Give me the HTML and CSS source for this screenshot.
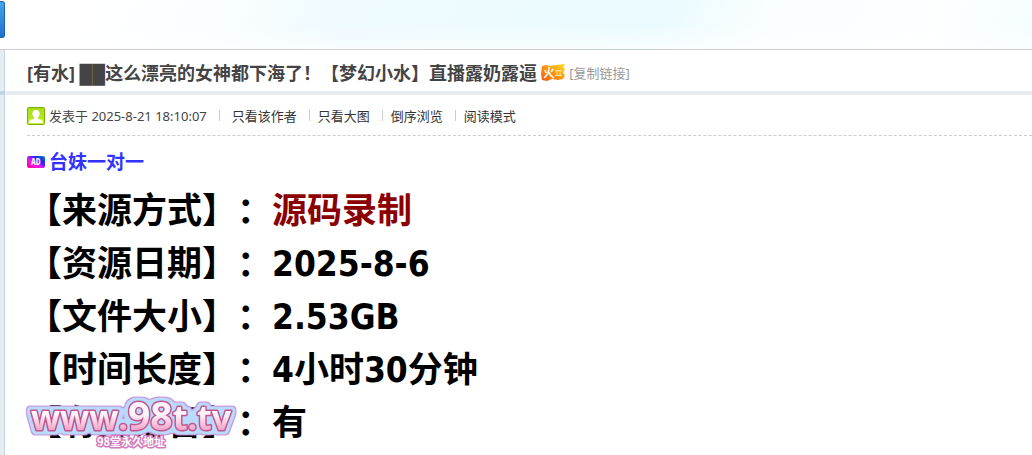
FILE: index.html
```html
<!DOCTYPE html>
<html lang="zh-CN">
  <head>
    <meta charset="UTF-8" />
    <meta name="viewport" content="width=device-width, initial-scale=1.0" />
    <title>台妹一对一</title>
    <link rel="stylesheet" href="styles.css">
  </head>
  <body>
    <div class="header">
      <button class="nav-btn" type="button" aria-label="返回"></button>
    </div>
    <div class="thread">
      <div class="side">
        <div class="side-head"></div>
        <div class="side-body"></div>
      </div>
      <div class="main">
        <div class="title">
          <h1><a href="#">[有水]</a> <span class="block">██</span>这么漂亮的女神都下海了！【梦幻小水】直播露奶露逼</h1>
          <svg class="hot" width="24" height="18" viewBox="0 0 24 18">
            <defs>
              <linearGradient id="fire" x1="0" y1="1" x2="1" y2="0">
                <stop offset="0" stop-color="#ef5a10" />
                <stop offset="0.5" stop-color="#ff9410" />
                <stop offset="1" stop-color="#ffe026" />
              </linearGradient>
            </defs>
            <path d="M1 2L5 1L9 2L15 1L24 0L22 4L24 5L22 9L24 11L22 15L17 16L11 15L6 17L1 16L0 10Z" fill="url(#fire)" />
            <path d="M8 3Q8 10 3 14M8 8Q9 12 13 14M4 6L5 9M12 5L10 8" fill="none" stroke="#fff" stroke-width="1.6" />
            <path d="M14 6.500H21M14 11.500H21M16 6V12M19 6V12" stroke="#ffe9a0" />
          </svg>
          <a class="copy" href="#">[复制链接]</a>
        </div>
        <div class="post">
          <div class="info">
            <svg width="18" height="18" viewBox="0 0 18 18">
              <defs>
                <linearGradient id="green" x1="0" y1="0" x2="0" y2="1">
                  <stop offset="0" stop-color="#a5dc18" />
                  <stop offset="1" stop-color="#c6ee35" />
                </linearGradient>
              </defs>
              <rect x="0.5" y="0.5" width="17" height="17" rx="1" fill="url(#green)" stroke="#79b000" />
              <path d="M9 3C4 3 5 9 7 10V12L3 13L2 16H16L15 13L11 12V10C13 9 14 3 9 3Z" fill="#fff" />
            </svg>
            <span class="time">发表于 2025-8-21 18:10:07</span>
            <i></i><a class="author" href="#">只看该作者</a>
            <i></i><a href="#">只看大图</a>
            <i></i><a href="#">倒序浏览</a>
            <i></i><a href="#">阅读模式</a>
          </div>
          <div class="ad">
            <svg width="18" height="12" viewBox="0 0 18 12">
              <defs>
                <linearGradient id="adbg" x1="0" y1="1" x2="1" y2="0">
                  <stop offset="0" stop-color="#ff0090" />
                  <stop offset="0.4" stop-color="#ed18ee" />
                  <stop offset="0.7" stop-color="#2023ec" />
                  <stop offset="1" stop-color="#008fb5" />
                </linearGradient>
              </defs>
              <rect width="18" height="12" rx="2" fill="url(#adbg)" />
              <text x="4" y="9" class="ad-text">AD</text>
            </svg>
            <a href="#">台妹一对一</a>
          </div>
          <div class="content">
            <p>【来源方式】：<span class="red">源码录制</span></p>
            <p>【资源日期】：2025-8-6</p>
            <p>【文件大小】：2.53GB</p>
            <p>【时间长度】：4小时30分钟</p>
            <p>【有无语音】：有</p>
            <svg class="mark" width="224" height="64" viewBox="0 0 224 64">
              <defs>
                <linearGradient id="pink" x1="0" y1="0" x2="0" y2="1">
                  <stop offset="0.5" stop-color="#fff4fa" />
                  <stop offset="0.8" stop-color="#f3a2c8" />
                </linearGradient>
                <!-- blue halo with a thin purple rim -->
                <filter id="halo" filterUnits="userSpaceOnUse" x="0" y="0" width="224" height="64" color-interpolation-filters="sRGB">
                  <feMorphology in="SourceAlpha" operator="dilate" radius="3" />
                  <feGaussianBlur stdDeviation="1.5" />
                  <feComponentTransfer result="outer">
                    <feFuncA type="linear" slope="4" intercept="-0.6" />
                  </feComponentTransfer>
                  <feFlood flood-color="#ca91dc" />
                  <feComposite in2="outer" operator="in" result="rim" />
                  <feMorphology in="outer" operator="erode" radius="1" result="inner" />
                  <feFlood flood-color="#b9dafa" />
                  <feComposite in2="inner" operator="in" result="blue" />
                  <feMerge>
                    <feMergeNode in="rim" />
                    <feMergeNode in="blue" />
                    <feMergeNode in="SourceGraphic" />
                  </feMerge>
                </filter>
              </defs>
              <text class="mark-url" x="9" y="39">www.<tspan class="num">98</tspan>t.tv</text>
              <text class="mark-sub" x="75" y="55">98堂永久地址</text>
            </svg>
          </div>
        </div>
      </div>
    </div>
  </body>
</html>
```
FILE: styles.css
```css
* {
  margin: 0;
  padding: 0;
  box-sizing: border-box;
}
html {
  height: 100%;
}
body {
  height: 100%;
  display: flex;
  flex-direction: column;
  overflow: hidden;
  background-color: #fff;
  color: #444;
  font: 13px/18px "Noto Sans", "Noto Sans CJK SC", sans-serif;
  text-spacing-trim: space-all;
}
a {
  color: #333;
  text-decoration: none;
}
svg {
  flex: none;
}
.header {
  flex: none;
  height: 50px;
  border-bottom: 1px solid #cdcdcd;
  background: linear-gradient(to bottom, transparent 50%, rgba(255, 255, 255, 0.6)),
    linear-gradient(110deg, #fff 8%, #fafeff 22%, #effbff 32%, #ebfbff 64%, #fafeff 74%, #fdffff 90%, #f4fdff 100%);
}
.nav-btn {
  display: block;
  width: 5px;
  height: 37px;
  margin-top: 1px;
  border: 1px solid #1c63ad;
  border-left: 0;
  border-radius: 0 3px 3px 0;
  background: linear-gradient(#48a5ea, #1e70ce);
}
.thread {
  flex: 1;
  display: flex;
}
.side {
  width: 5px;
  background-color: #e5edf2;
  border-right: 1px solid #c2d5e3;
}
.side-head {
  height: 45px;
  border-bottom: 4px solid #c2d5e3;
}
.main {
  flex: 1;
}
.title {
  display: flex;
  align-items: center;
  height: 45px;
  padding: 5px 22px 0;
  border-bottom: 4px solid #e5edf2;
}
.title h1 {
  font-size: 18px;
  line-height: 24px;
  white-space: nowrap;
}
.title h1 a {
  color: #444;
}
.block {
  font-family: "Liberation Sans", sans-serif;
}
.hot {
  margin: 0 4px;
}
.title .copy {
  color: #999;
}
.post {
  padding-left: 22px;
}
.info {
  display: flex;
  align-items: center;
  height: 41px;
  padding-top: 1px;
  border-bottom: 1px dashed #cdcdcd;
}
.time {
  margin-left: 4px;
}
.info i {
  width: 1px;
  height: 11px;
  margin: 0 8px 0 12px;
  background-color: #ccc;
}
.info .author {
  margin-left: 4px;
}
.ad {
  display: flex;
  align-items: center;
  gap: 4px;
  height: 49px;
  padding-top: 2px;
}
.ad a {
  color: #33f;
  font-size: 19px;
  font-weight: bold;
}
.ad-text {
  font: bold 8px "DejaVu Sans Mono", monospace;
  fill: #fff;
}
.content {
  position: relative;
  color: #000;
  font: bold 35px/53px "DejaVu Sans Condensed", "Noto Sans CJK SC", sans-serif;
}
.red {
  color: #8b0000;
}
.mark {
  position: absolute;
  left: -5px;
  bottom: -5px;
}
.mark text {
  stroke-linejoin: round;
  paint-order: stroke;
}
.mark-url {
  font: bold 34px "Open Sans", sans-serif;
  fill: url(#pink);
  stroke: #c0588f;
  stroke-width: 3px;
  filter: url(#halo);
}
.num {
  font-size: 39px;
}
.mark-sub {
  font: bold 11px "Noto Sans CJK SC", sans-serif;
  fill: #fff;
  stroke: #d37bbd;
  stroke-width: 3px;
}
```
